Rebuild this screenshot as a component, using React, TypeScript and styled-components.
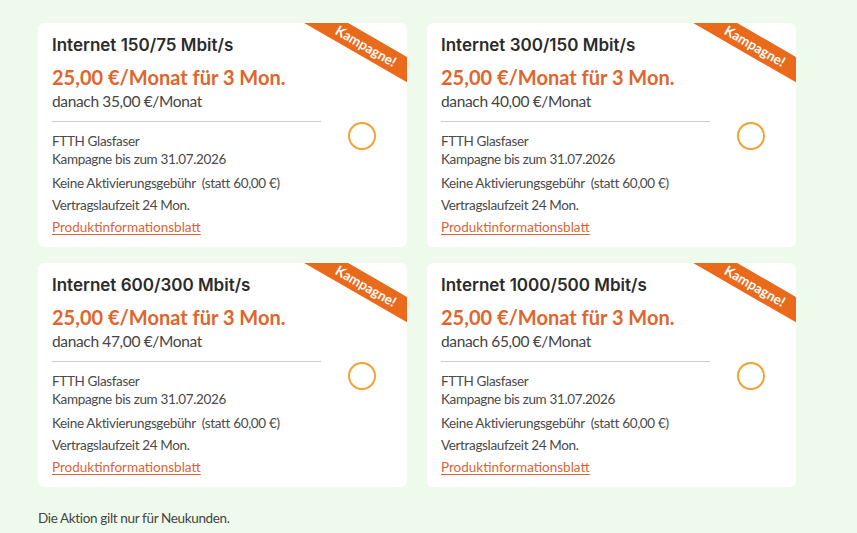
import React from "react";
import styled, { createGlobalStyle } from "styled-components";

const Global = createGlobalStyle`
  html, body { margin: 0; padding: 0; background: #eefaeb; }
  body { font-family: "Lato", "Liberation Sans", sans-serif; }
`;

const Page = styled.div`
  padding: 23px 0 0 38px;
  width: 857px;
  height: 533px;
  box-sizing: border-box;
  background: #eefaeb;
`;

const Grid = styled.div`
  display: grid;
  grid-template-columns: 369px 369px;
  column-gap: 20px;
  row-gap: 16px;
`;

const Card = styled.div`
  position: relative;
  overflow: hidden;
  background: #ffffff;
  border-radius: 6px;
  height: 224px;
  box-sizing: border-box;
  padding: 10px 0 0 14px;
  display: flex;
  align-items: stretch;
`;

const Info = styled.div`
  width: 269px;
  display: flex;
  flex-direction: column;
`;

const Title = styled.div`
  font-family: "Inter", sans-serif;
  font-weight: 600;
  font-size: 17px;
  line-height: 24px;
  color: #2b2b2b;
`;

const Price = styled.div`
  margin-top: 6px;
  font-weight: 700;
  font-size: 20px;
  line-height: 28px;
  color: #e0652c;
`;

const After = styled.div`
  font-size: 15.5px;
  line-height: 20px;
  letter-spacing: -0.35px;
  color: #444444;
`;

const Divider = styled.div`
  margin-top: 10px;
  height: 1px;
  background: #cccccc;
`;

const Line = styled.div<{ $gap?: number; $lh?: number }>`
  margin-top: ${(p) => p.$gap ?? 0}px;
  font-size: 13.5px;
  letter-spacing: -0.35px;
  line-height: ${(p) => p.$lh ?? 18}px;
  color: #4a4a4a;
`;

const Note = styled.span`
  margin-left: 6px;
`;

const Link = styled.a`
  font-size: 13.5px;
  line-height: 22px;
  color: #d9643a;
  text-decoration: underline;
  text-underline-offset: 2px;
`;

const Radio = styled.div`
  width: 24px;
  height: 24px;
  border: 2px solid #f0a233;
  border-radius: 50%;
  margin: 89px 0 0 27px;
  align-self: flex-start;
`;

const Ribbon = styled.div`
  position: absolute;
  top: 12px;
  left: 248px;
  width: 160px;
  height: 22px;
  transform: rotate(30deg);
  background: #ea6a1b;
  color: #ffffff;
  font-weight: 700;
  font-size: 13.5px;
  line-height: 22px;
  text-align: center;
`;

const Footer = styled.div`
  margin-top: 22px;
  font-size: 13.5px;
  letter-spacing: -0.35px;
  line-height: 18px;
  color: #444444;
`;

const products = [
  { title: "Internet 150/75 Mbit/s", after: "35,00" },
  { title: "Internet 300/150 Mbit/s", after: "40,00" },
  { title: "Internet 600/300 Mbit/s", after: "47,00" },
  { title: "Internet 1000/500 Mbit/s", after: "65,00" },
];

export default function App() {
  return (
    <Page>
      <Global />
      <Grid>
        {products.map((p) => (
          <Card key={p.title}>
            <Info>
              <Title>{p.title}</Title>
              <Price>25,00 €/Monat für 3 Mon.</Price>
              <After>danach {p.after} €/Monat</After>
              <Divider />
              <Line $gap={10}>FTTH Glasfaser</Line>
              <Line>Kampagne bis zum 31.07.2026</Line>
              <Line $gap={4} $lh={22}>
                Keine Aktivierungsgebühr<Note>(statt 60,00 €)</Note>
              </Line>
              <Line $lh={22}>Vertragslaufzeit 24 Mon.</Line>
              <div>
                <Link href="#">Produktinformationsblatt</Link>
              </div>
            </Info>
            <Radio />
            <Ribbon>Kampagne!</Ribbon>
          </Card>
        ))}
      </Grid>
      <Footer>Die Aktion gilt nur für Neukunden.</Footer>
    </Page>
  );
}
